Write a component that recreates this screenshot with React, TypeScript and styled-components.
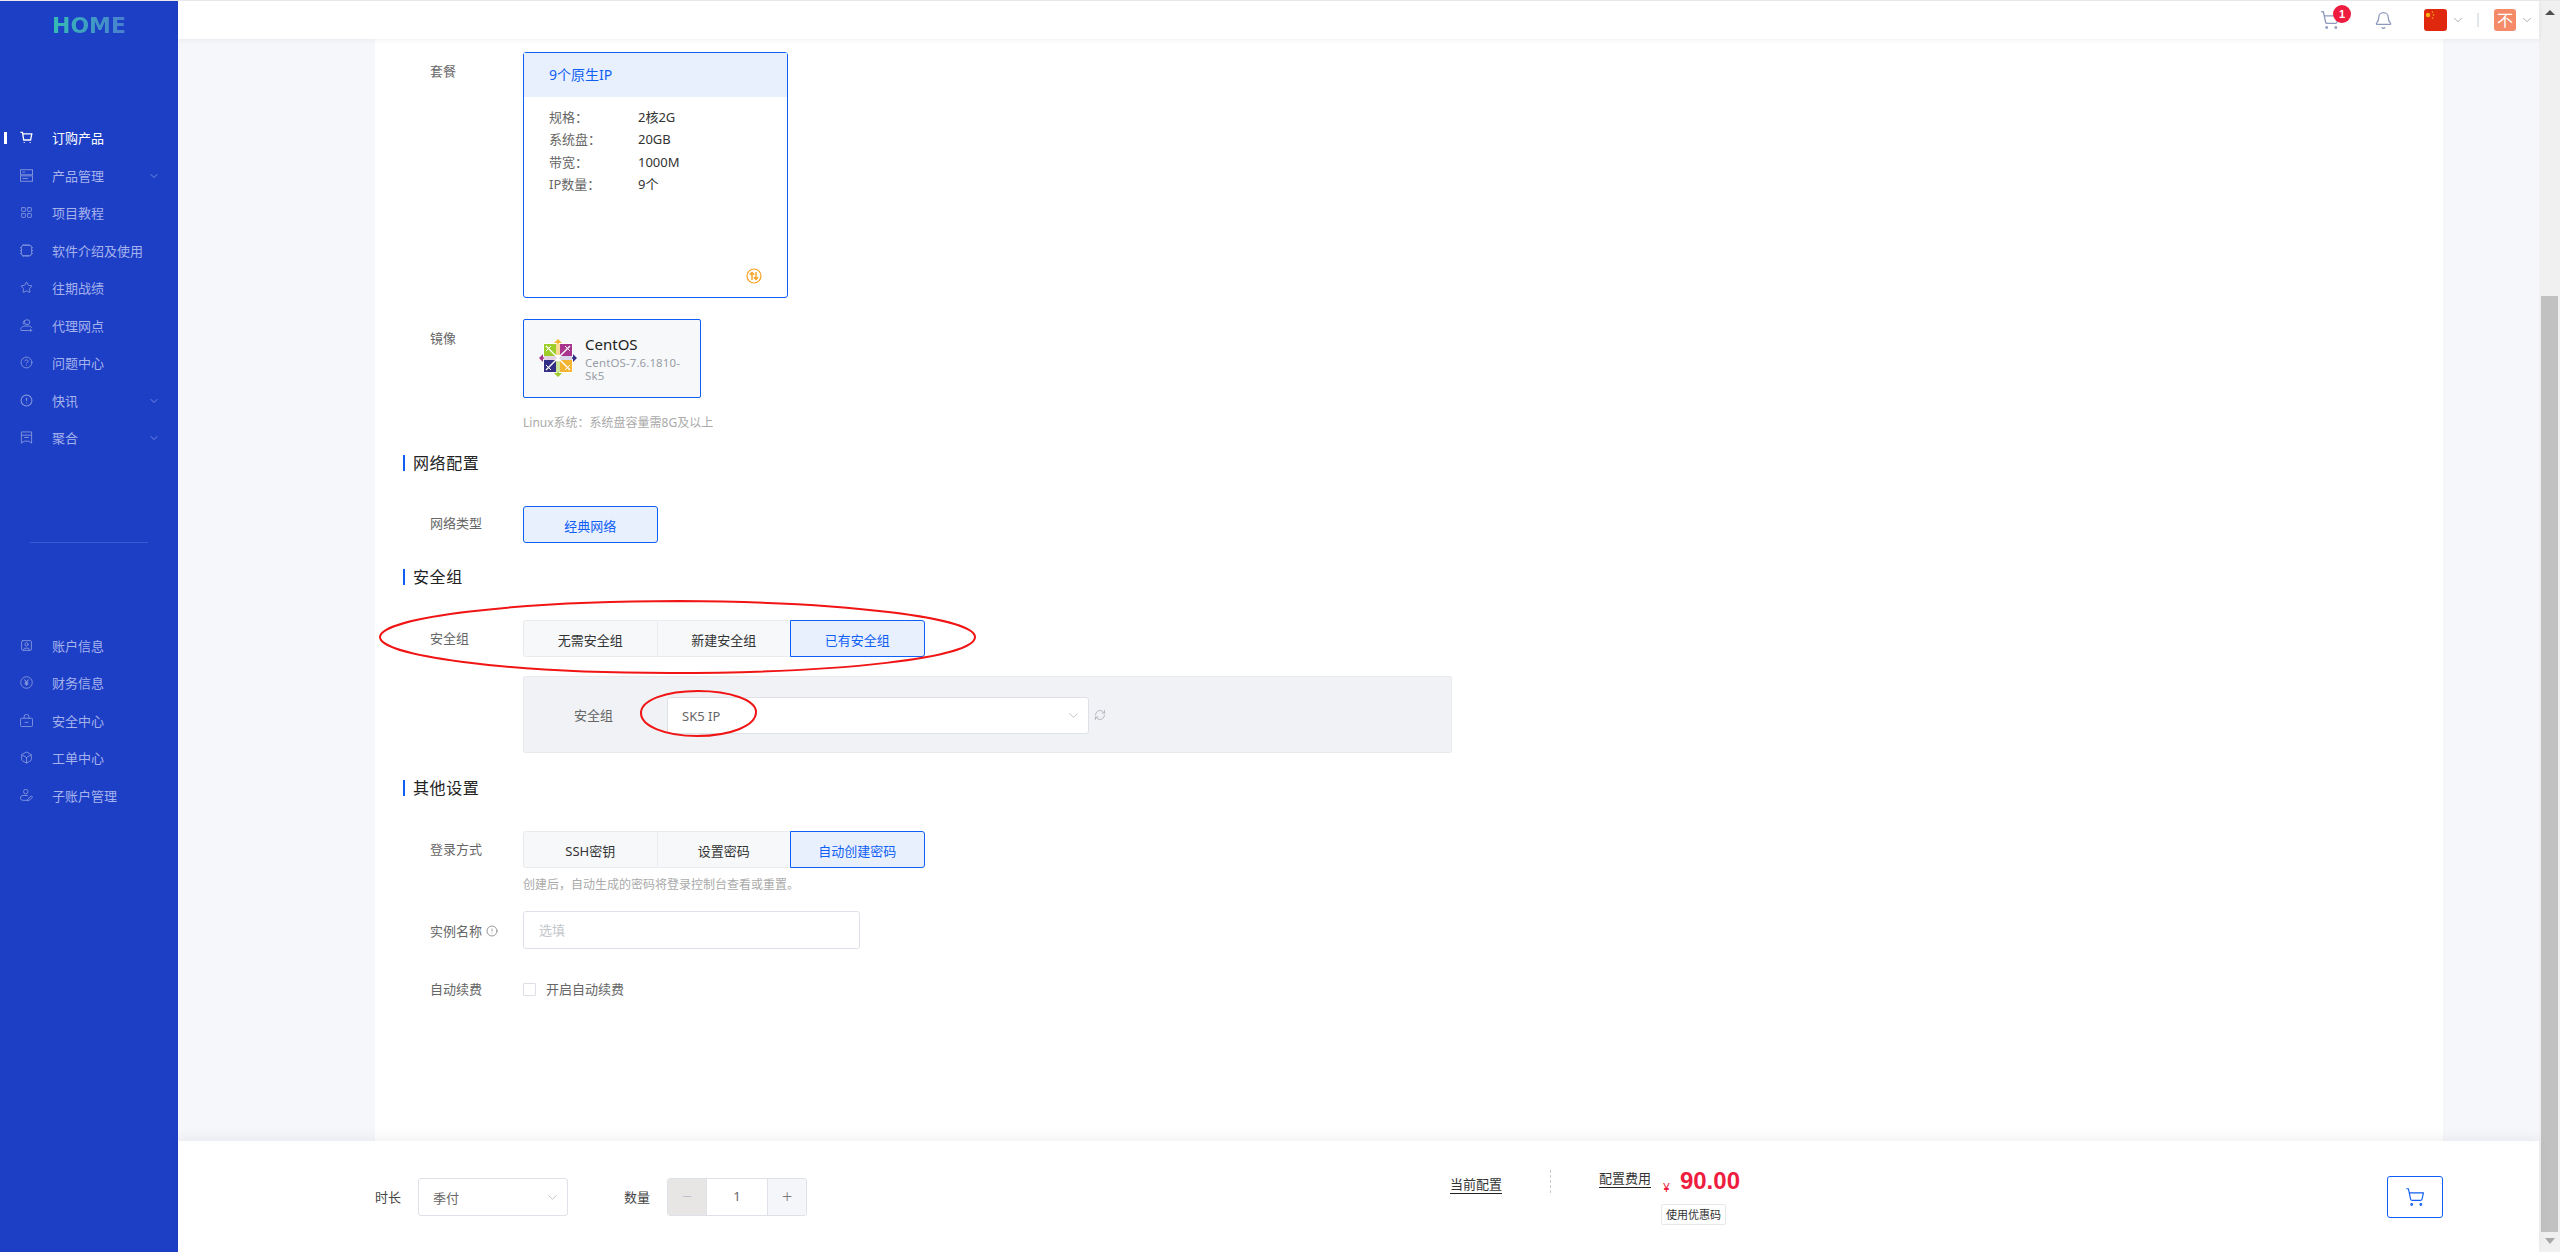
import React from "react";
import styled, { createGlobalStyle } from "styled-components";
import {
  Bell,
  Box,
  ChevronDown,
  CircleAlert,
  CircleHelp,
  LayoutGrid,
  RefreshCw,
  ShoppingCart,
  SquareUser,
  Star,
} from "lucide-react";

const FONT = `"Noto Sans", "Noto Sans CJK SC", sans-serif`;
const BLUE = "#0f5ff5";

const GlobalStyle = createGlobalStyle`
  html, body { margin: 0; padding: 0; height: 100%; overflow: hidden; }
  body { font-family: ${FONT}; font-size: 13px; color: #333; background: #fff; }
  #root { height: 100%; }
  * { box-sizing: border-box; }
`;

const Shell = styled.div`
  display: flex;
  height: 100vh;
  border-top: 1px solid #e8e8ea;
  overflow: hidden;
`;

const Sidebar = styled.aside`
  width: 178px;
  flex: none;
  background: #1d3fc6;
`;

const Logo = styled.div`
  font-family: "DejaVu Sans", sans-serif;
  font-weight: 700;
  font-size: 22px;
  line-height: 26px;
  padding: 12px 0 0 52px;
  height: 118px;
  span {
    background: linear-gradient(90deg, #35bcb4, #4a7fd0);
    -webkit-background-clip: text;
    background-clip: text;
    color: transparent;
  }
`;

const NavItem = styled.div<{ $active?: boolean }>`
  position: relative;
  display: flex;
  align-items: center;
  height: 37.5px;
  padding: 0 20px;
  gap: 19px;
  color: ${({ $active }) => ($active ? "#fff" : "#a5b2ec")};
  svg.nav-icon {
    width: 13px;
    height: 13px;
    flex: none;
    color: ${({ $active }) => ($active ? "#fff" : "#8395dc")};
  }
  &::before {
    content: "";
    display: ${({ $active }) => ($active ? "block" : "none")};
    position: absolute;
    left: 4px;
    top: 13px;
    width: 3px;
    height: 12px;
    background: #fff;
  }
`;

const NavChevron = styled(ChevronDown)`
  position: absolute;
  left: 148px;
  top: 13px;
  width: 12px;
  height: 12px;
  color: #8fa0e6;
`;

const SideDivider = styled.div`
  height: 1px;
  margin: 85px 30px 84px;
  background: #3a59d2;
`;

const Main = styled.div`
  flex: 1;
  min-width: 0;
  display: flex;
  flex-direction: column;
`;

const Header = styled.header`
  position: relative;
  z-index: 2;
  height: 38px;
  flex: none;
  background: #fff;
  box-shadow: 0 1px 5px rgba(30, 40, 80, 0.07);
  display: flex;
  align-items: center;
  justify-content: flex-end;
  padding-right: 5px;
  color: #8e9abd;
`;

const CartWrap = styled.div`
  position: relative;
  display: flex;
  margin-right: 34px;
`;

const Badge = styled.span`
  position: absolute;
  left: 13px;
  top: -5px;
  width: 18px;
  height: 18px;
  border-radius: 50%;
  background: #ee1c3e;
  color: #fff;
  font: 700 11px/18px "Liberation Sans", sans-serif;
  text-align: center;
`;

const Flag = styled.svg`
  width: 23px;
  height: 22px;
  border-radius: 3px;
  margin-left: 31px;
`;

const HeadChevron = styled(ChevronDown)`
  width: 14px;
  height: 14px;
  color: #a2a2a8;
  margin-left: 4px;
`;

const HeadDivider = styled.div`
  width: 2px;
  height: 14px;
  background: #e4e6ee;
  margin: 0 15px 0 12px;
`;

const Avatar = styled.div`
  width: 22px;
  height: 22px;
  border-radius: 3px;
  background: #f48a68;
  color: #fff;
  font-size: 16px;
  line-height: 22px;
  text-align: center;
`;

const Body = styled.div`
  flex: 1;
  min-height: 0;
  background: #f6f7fa;
  padding: 0 96px 0 197px;
`;

const Content = styled.div`
  height: 100%;
  background: #fff;
  padding-top: 13px;
`;

const Row = styled.div<{ $mt?: number }>`
  position: relative;
  display: flex;
  padding-left: 55px;
  margin-top: ${({ $mt }) => $mt ?? 0}px;
`;

const Label = styled.div<{ $top?: number }>`
  width: 93px;
  flex: none;
  line-height: 20px;
  padding-top: ${({ $top }) => $top ?? 8}px;
  color: #666;
  display: flex;
  align-items: center;
  gap: 4px;
  align-self: flex-start;
  svg {
    width: 12px;
    height: 12px;
    color: #777;
  }
`;

const PlanCard = styled.div`
  width: 265px;
  height: 246px;
  border: 1px solid ${BLUE};
  border-radius: 3px;
  display: flex;
  flex-direction: column;
`;

const PlanTitle = styled.div`
  height: 44px;
  flex: none;
  background: #e8f0fe;
  padding-left: 25px;
  color: ${BLUE};
  font-size: 14px;
  line-height: 44px;
`;

const SpecList = styled.dl`
  margin: 9px 0 0;
  padding-left: 25px;
  display: grid;
  grid-template-columns: 89px 1fr;
  grid-auto-rows: 22.4px;
  line-height: 22.4px;
  dt { color: #666; }
  dd { margin: 0; color: #333; }
`;

const PlanBadge = styled.svg`
  width: 16px;
  height: 16px;
  margin: auto 25px 13px auto;
`;

const ImageCard = styled.div`
  width: 178px;
  height: 79px;
  border: 1px solid ${BLUE};
  border-radius: 2px;
  background: #f6f8fa;
  display: flex;
  padding: 19px 10px 0 15px;
  gap: 8px;
`;

const ImageName = styled.div`
  font-size: 15px;
  line-height: 18px;
  color: #222;
  margin-top: -4px;
  small {
    display: block;
    font-size: 11.5px;
    line-height: 12.5px;
    color: #9a9ea6;
    margin-top: 4px;
    width: 100px;
    letter-spacing: 0.1px;
  }
`;

const Hint = styled.div<{ $mt: number }>`
  margin: ${({ $mt }) => $mt}px 0 0 148px;
  font-size: 12px;
  line-height: 18px;
  color: #aaa;
`;

const Heading = styled.h3<{ $mt: number }>`
  margin: ${({ $mt }) => $mt}px 0 0 28px;
  font-size: 16px;
  font-weight: 400;
  line-height: 16px;
  color: #222;
  display: flex;
  align-items: center;
  gap: 8px;
  letter-spacing: 0.6px;
  &::before {
    content: "";
    width: 2px;
    height: 16px;
    background: ${BLUE};
  }
`;

const Segments = styled.div`
  display: flex;
  height: 37px;
`;

const Segment = styled.div<{ $active?: boolean }>`
  width: 134.5px;
  padding-top: 2px;
  text-align: center;
  line-height: 34px;
  border: 1px solid ${({ $active }) => ($active ? BLUE : "#e9ebef")};
  margin-left: -1px;
  background: ${({ $active }) => ($active ? "#e8f0fe" : "#f6f8fa")};
  color: ${({ $active }) => ($active ? BLUE : "#333")};
  position: relative;
  &:first-child { margin-left: 0; border-radius: 3px 0 0 3px; }
  &:last-child { border-radius: 0 3px 3px 0; }
  &:only-child { border-radius: 3px; }
`;

const Ring = styled.svg<{ $left: number; $top: number }>`
  position: absolute;
  left: ${({ $left }) => $left}px;
  top: ${({ $top }) => $top}px;
  z-index: 3;
  overflow: visible;
  pointer-events: none;
`;

const Panel = styled.div`
  position: relative;
  width: 929px;
  height: 77px;
  margin: 19px 0 0 148px;
  background: #f0f2f5;
  border: 1px solid #e8eaee;
  border-radius: 2px;
  padding: 20px 0 0 50px;
  display: flex;
  align-items: flex-start;
`;

const PanelLabel = styled.div`
  width: 93px;
  line-height: 36px;
  color: #666;
`;

const SelectBox = styled.div<{ $width: number }>`
  width: ${({ $width }) => $width}px;
  height: 37px;
  flex: none;
  background: #fff;
  border: 1px solid #dfe1e8;
  border-radius: 3px;
  display: flex;
  align-items: center;
  justify-content: space-between;
  padding: 0 7px 0 14px;
  color: #666;
  svg {
    width: 15px;
    height: 15px;
    color: #b5b8c0;
    stroke-width: 1.3;
  }
`;

const Refresh = styled(RefreshCw)`
  width: 12px;
  height: 12px;
  margin: 12px 0 0 5px;
  color: #a4a8b0;
`;

const TextInput = styled.div`
  width: 337px;
  height: 38px;
  border: 1px solid #dfe1e8;
  border-radius: 3px;
  padding-left: 15px;
  line-height: 36px;
  color: #c4c6cc;
`;

const CheckRow = styled.div`
  display: flex;
  align-items: center;
  gap: 10px;
  line-height: 20px;
  color: #666;
`;

const CheckBox = styled.span`
  width: 13px;
  height: 13px;
  border: 1px solid #dcdfe6;
  border-radius: 1px;
`;

const Footer = styled.footer`
  position: relative;
  z-index: 2;
  height: 111px;
  flex: none;
  background: #fff;
  box-shadow: 0 -5px 9px rgba(30, 40, 80, 0.05);
  display: flex;
  padding: 37px 96px 0 197px;
`;

const FootLabel = styled.div<{ $mr: number }>`
  line-height: 38px;
  margin-right: ${({ $mr }) => $mr}px;
  color: #444;
`;

const Stepper = styled.div`
  display: flex;
  width: 140px;
  height: 38px;
  border: 1px solid #dfe1e8;
  border-radius: 3px;
  overflow: hidden;
  margin-right: 643px;
`;

const StepButton = styled.div<{ $disabled?: boolean }>`
  width: 38px;
  flex: none;
  text-align: center;
  font-size: 18px;
  line-height: 34px;
  font-weight: 300;
  background: ${({ $disabled }) => ($disabled ? "#e8e6e4" : "#f5f6fa")};
  color: ${({ $disabled }) => ($disabled ? "#b4bccb" : "#777")};
`;

const StepValue = styled.div`
  flex: 1;
  border-style: solid;
  border-color: #dfe1e8;
  border-width: 0 1px;
  text-align: center;
  line-height: 34px;
  color: #666;
`;

const LinkText = styled.span`
  display: inline-block;
  line-height: 15px;
  border-bottom: 1px solid #222;
  color: #333;
  height: 17px;
`;

const CurrentConfig = styled.div`
  width: 100px;
  margin-top: -3px;
`;

const DashLine = styled.div`
  width: 0;
  height: 23px;
  margin: -8px 48px 0 0;
  border-left: 1px dashed #ccc;
`;

const PriceCol = styled.div`
  width: 150px;
  margin-top: -7px;
`;

const PriceLine = styled.div`
  display: flex;
  align-items: flex-start;
`;

const Yen = styled.span`
  color: #ee1c3e;
  font-size: 12px;
  margin: 9px 10px 0 12px;
  line-height: 16px;
`;

const Amount = styled.span`
  color: #ee1c3e;
  font: 700 24px/24px "Liberation Sans", sans-serif;
  margin-top: -2px;
`;

const Coupon = styled.div`
  width: 65px;
  height: 21px;
  margin: 8px 0 0 62px;
  border: 1px solid #e8e8e8;
  border-radius: 2px;
  font-size: 11px;
  line-height: 19px;
  text-align: center;
  color: #333;
  white-space: nowrap;
`;

const CartButton = styled.div`
  width: 56px;
  height: 42px;
  margin: -2px 0 0 auto;
  border: 1px solid ${BLUE};
  border-radius: 3px;
  color: ${BLUE};
  display: flex;
  align-items: center;
  justify-content: center;
  svg { width: 20px; height: 20px; stroke-width: 1.4; }
`;

const ScrollTrack = styled.div`
  width: 21px;
  flex: none;
  background: #f0f0f0;
  display: flex;
  flex-direction: column;
  align-items: center;
  padding-top: 9px;
`;

const ScrollArrow = styled.span<{ $down?: boolean }>`
  width: 0;
  height: 0;
  border-left: 5px solid transparent;
  border-right: 5px solid transparent;
  ${({ $down }) =>
    $down ? "border-top: 6px solid #a8a8a8;" : "border-bottom: 5px solid #505050;"}
`;

const ScrollThumb = styled.div`
  width: 17px;
  height: 936px;
  margin: 281px 0 6px;
  background: #c1c1c1;
`;

const iconProps = {
  viewBox: "0 0 14 14",
  fill: "none",
  stroke: "currentColor",
  strokeWidth: 1,
  className: "nav-icon",
};

const OrderIcon = () => (
  <svg {...iconProps} strokeWidth={1.4}>
    <path d="M0.5 1.5h2.2l1.3 8.2h7.4l1.3-6.7H3.2M4.6 12v1M11 12v1" />
  </svg>
);
const ProductIcon = () => (
  <svg {...iconProps}>
    <rect x="0.5" y="0.8" width="13" height="5.4" />
    <rect x="0.5" y="7.4" width="13" height="5.8" />
    <path d="M2.5 3.4h3M2.5 10.2h6" />
  </svg>
);
const ChipIcon = () => (
  <svg {...iconProps}>
    <rect x="1.5" y="1.5" width="11" height="11" rx="2" />
    <path d="M3.5 0v1.5M5.5 0v1.5M7.5 0v1.5M9.5 0v1.5M3.5 12.5V14M5.5 12.5V14M7.5 12.5V14M9.5 12.5V14M0 4h1.5M0 7h1.5M0 10h1.5M12.5 4H14M12.5 7H14M12.5 10H14" />
  </svg>
);
const AgentIcon = () => (
  <svg {...iconProps}>
    <ellipse cx="7.6" cy="3.4" rx="3" ry="2.6" />
    <path d="M5 1.6A2.4 2.4 0 0 0 4.6 6M1 12.2c-.9-2.8 1.8-4.6 4.6-4.6h4c1.6 0 2.6.8 3 2M1 12.4h8.6M11.4 10.6v3.2M9.8 12.2h3.4" />
  </svg>
);
const BookmarkIcon = () => (
  <svg {...iconProps}>
    <path d="M1.5 1h11v12L9.5 11h-5l-3 2zM1.5 4.5h11M4.5 7h5" />
  </svg>
);
const YuanIcon = () => (
  <svg {...iconProps}>
    <circle cx="7" cy="7" r="6.2" />
    <path d="M4.8 3.8 7 6.6l2.2-2.8M7 6.6v3.8M5 7.2h4M5 8.8h4" strokeWidth={1.2} />
  </svg>
);
const LockIcon = () => (
  <svg {...iconProps}>
    <rect x="0.5" y="4.6" width="13" height="8.9" rx="1" />
    <path d="M4.4 4.6V3a2.6 2.6 0 0 1 5.2 0v1.6M5 9h4" />
  </svg>
);
const SubUserIcon = () => (
  <svg {...iconProps}>
    <circle cx="6.2" cy="2.8" r="2.4" />
    <path d="M8.5 7H3.4C1.6 7 .4 8.1.4 9.6s1.2 2.6 3 2.6h4.2M8 12.6l.5-1.9 3.6-3.3 1.5 1.5-3.7 3.2z" />
  </svg>
);

const ChevronFree = [
  { label: "订购产品", icon: <OrderIcon />, active: true },
  { label: "产品管理", icon: <ProductIcon />, more: true },
  { label: "项目教程", icon: <LayoutGrid {...iconProps} viewBox="0 0 24 24" strokeWidth={1.7} /> },
  { label: "软件介绍及使用", icon: <ChipIcon /> },
  { label: "往期战绩", icon: <Star {...iconProps} viewBox="0 0 24 24" strokeWidth={1.7} /> },
  { label: "代理网点", icon: <AgentIcon /> },
  { label: "问题中心", icon: <CircleHelp {...iconProps} viewBox="0 0 24 24" strokeWidth={1.7} /> },
  { label: "快讯", icon: <CircleAlert {...iconProps} viewBox="0 0 24 24" strokeWidth={2} />, more: true },
  { label: "聚合", icon: <BookmarkIcon />, more: true },
];

const accountNav = [
  { label: "账户信息", icon: <SquareUser {...iconProps} viewBox="0 0 24 24" strokeWidth={1.7} /> },
  { label: "财务信息", icon: <YuanIcon /> },
  { label: "安全中心", icon: <LockIcon /> },
  { label: "工单中心", icon: <Box {...iconProps} viewBox="0 0 24 24" strokeWidth={1.7} /> },
  { label: "子账户管理", icon: <SubUserIcon /> },
];

type NavEntry = { label: string; icon: React.ReactNode; active?: boolean; more?: boolean };

const NavList = ({ items }: { items: NavEntry[] }) => (
  <nav>
    {items.map((item) => (
      <NavItem key={item.label} $active={item.active}>
        {item.icon}
        <span>{item.label}</span>
        {item.more && <NavChevron strokeWidth={1.5} />}
      </NavItem>
    ))}
  </nav>
);

const CentOSLogo = () => (
  <svg width="38" height="38" viewBox="0 0 38 38" style={{ flex: "none" }}>
    <rect x="5" y="5" width="13" height="13" fill="#9ccd2a" />
    <rect x="20" y="5" width="13" height="13" fill="#a8348e" />
    <rect x="5" y="20" width="13" height="13" fill="#332f86" />
    <rect x="20" y="20" width="13" height="13" fill="#f3b431" />
    <path d="M19 0l5 5h-3v11h-4V5h-3z" fill="#f3b431" />
    <path d="M38 19l-5 5v-3H22v-4h11v-3z" fill="#332f86" />
    <path d="M19 38l-5-5h3V22h4v11h3z" fill="#9ccd2a" />
    <path d="M0 19l5-5v3h11v4H5v3z" fill="#a8348e" />
    <path d="M17 16h4v6h-4z" fill="#fff" />
    <path d="M5 17h13v4H5z" fill="#c9a6cf" />
    <path d="M20 17h13v4H20z" fill="#b3b0d6" />
    <path d="M4.5 4.5h13.5v13.5H4.5zM20 4.5h13.5v13.5H20zM4.5 20h13.5v13.5H4.5zM20 20h13.5v13.5H20z" fill="none" stroke="#fff" strokeWidth="1" />
    <path d="M7 7l24 24M31 7L7 31" stroke="#fff" strokeWidth="1.4" />
    <path d="M7 12l5-5M26 7l5 5M7 26l5 5M26 31l5-5" stroke="#fff" strokeWidth="1" />
  </svg>
);

const App = () => (
  <>
    <GlobalStyle />
    <Shell>
      <Sidebar>
        <Logo>
          <span>HOME</span>
        </Logo>
        <NavList items={ChevronFree} />
        <SideDivider />
        <NavList items={accountNav} />
      </Sidebar>

      <Main>
        <Header>
          <CartWrap>
            <ShoppingCart size={20} strokeWidth={1.6} />
            <Badge>1</Badge>
          </CartWrap>
          <Bell size={19} strokeWidth={1.6} />
          <Flag viewBox="0 0 23 22">
            <rect width="23" height="22" fill="#e0280f" />
            <circle cx="4" cy="6" r="2.2" fill="#f6b01a" />
            <circle cx="8.5" cy="3" r="0.8" fill="#f6b01a" />
            <circle cx="9.5" cy="6" r="0.8" fill="#f6b01a" />
            <circle cx="8.5" cy="9" r="0.8" fill="#f6b01a" />
          </Flag>
          <HeadChevron strokeWidth={1.5} />
          <HeadDivider />
          <Avatar>不</Avatar>
          <HeadChevron strokeWidth={1.5} />
        </Header>

        <Body>
          <Content>
            <Row>
              <Label $top={9}>套餐</Label>
              <PlanCard>
                <PlanTitle>9个原生IP</PlanTitle>
                <SpecList>
                  <dt>规格：</dt>
                  <dd>2核2G</dd>
                  <dt>系统盘：</dt>
                  <dd>20GB</dd>
                  <dt>带宽：</dt>
                  <dd>1000M</dd>
                  <dt>IP数量：</dt>
                  <dd>9个</dd>
                </SpecList>
                <PlanBadge viewBox="0 0 16 16" fill="none" stroke="#f5a01e">
                  <circle cx="8" cy="8" r="7" strokeWidth="1.2" />
                  <path d="M6 12V4.5M3.8 6.7 6 4.5l2.2 2.2M10 4v7.5M7.8 9.3l2.2 2.2 2.2-2.2" strokeWidth="1.4" />
                </PlanBadge>
              </PlanCard>
            </Row>

            <Row $mt={21}>
              <Label $top={9}>镜像</Label>
              <ImageCard>
                <CentOSLogo />
                <ImageName>
                  CentOS
                  <small>CentOS-7.6.1810-Sk5</small>
                </ImageName>
              </ImageCard>
            </Row>
            <Hint $mt={16}>Linux系统：系统盘容量需8G及以上</Hint>

            <Heading $mt={23}>网络配置</Heading>
            <Row $mt={35}>
              <Label $top={7}>网络类型</Label>
              <Segments>
                <Segment $active>经典网络</Segment>
              </Segments>
            </Row>

            <Heading $mt={26}>安全组</Heading>
            <Row $mt={35}>
              <Label>安全组</Label>
              <Segments>
                <Segment>无需安全组</Segment>
                <Segment>新建安全组</Segment>
                <Segment $active>已有安全组</Segment>
              </Segments>
              <Ring $left={4} $top={-20} width="597" height="74" viewBox="0 0 597 74" fill="none" stroke="#f01414" strokeWidth="2">
                <path d="M300 1C140 1 2 17 1 37c0 18 120 36 290 36 170 0 305-15 305-36C596 18 470 2 300 1z" />
              </Ring>
            </Row>
            <Panel>
              <PanelLabel>安全组</PanelLabel>
              <SelectBox $width={422}>
                SK5 IP
                <ChevronDown />
              </SelectBox>
              <Refresh strokeWidth={1.5} />
              <Ring $left={116} $top={13} width="117" height="47" viewBox="0 0 117 47" fill="none" stroke="#f01414" strokeWidth="2">
                <path d="M58 1C26 1 1 10 1 23c0 13 24 23 56 23 33 0 59-10 59-24C116 10 90 1 58 1z" />
              </Ring>
            </Panel>

            <Heading $mt={27}>其他设置</Heading>
            <Row $mt={35}>
              <Label>登录方式</Label>
              <Segments>
                <Segment>SSH密钥</Segment>
                <Segment>设置密码</Segment>
                <Segment $active>自动创建密码</Segment>
              </Segments>
            </Row>
            <Hint $mt={8}>创建后，自动生成的密码将登录控制台查看或重置。</Hint>
            <Row $mt={17}>
              <Label $top={10}>
                实例名称
                <CircleAlert strokeWidth={1.5} />
              </Label>
              <TextInput>选填</TextInput>
            </Row>
            <Row $mt={30}>
              <Label $top={0}>自动续费</Label>
              <CheckRow>
                <CheckBox />
                开启自动续费
              </CheckRow>
            </Row>
          </Content>
        </Body>

        <Footer>
          <FootLabel $mr={17}>时长</FootLabel>
          <SelectBox $width={150} style={{ height: 38 }}>
            季付
            <ChevronDown />
          </SelectBox>
          <FootLabel $mr={17} style={{ marginLeft: 56 }}>
            数量
          </FootLabel>
          <Stepper>
            <StepButton $disabled>−</StepButton>
            <StepValue>1</StepValue>
            <StepButton>+</StepButton>
          </Stepper>
          <CurrentConfig>
            <LinkText>当前配置</LinkText>
          </CurrentConfig>
          <DashLine />
          <PriceCol>
            <PriceLine>
              <LinkText>配置费用</LinkText>
              <Yen>¥</Yen>
              <Amount>90.00</Amount>
            </PriceLine>
            <Coupon>使用优惠码</Coupon>
          </PriceCol>
          <CartButton>
            <ShoppingCart />
          </CartButton>
        </Footer>
      </Main>

      <ScrollTrack>
        <ScrollArrow />
        <ScrollThumb />
        <ScrollArrow $down />
      </ScrollTrack>
    </Shell>
  </>
);

export default App;
